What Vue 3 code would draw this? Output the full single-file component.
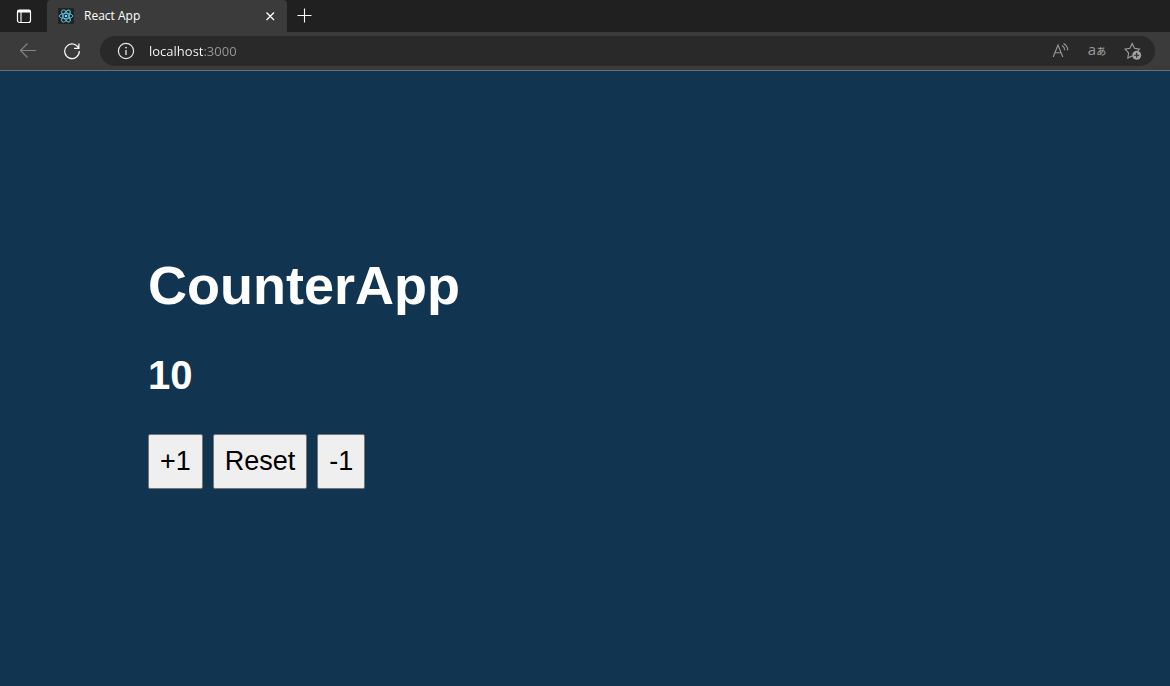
<script setup>
import { ref } from 'vue'

const initial = 10
const counter = ref(initial)
const address = ref('localhost:3000')
</script>

<template>
  <div class="browser">
    <header>
      <div class="tabstrip">
        <button class="icon-button tab-actions" aria-label="Tab actions menu">
          <svg width="16" height="16" viewBox="0 0 16 16" fill="none" stroke="#fff">
            <rect x="1.5" y="2" width="13" height="12.5" rx="2" stroke-width="1.2" />
            <path d="M1.5 3.2h13" stroke-width="2.6" />
            <path d="M5 4v10.5" stroke-width="1.1" />
          </svg>
        </button>
        <div class="tab">
          <svg class="favicon" width="16" height="16" viewBox="0 0 16 16" fill="none" stroke="#61c5df">
            <rect width="16" height="16" rx="1" fill="#202326" stroke="none" />
            <g stroke-width="0.9" transform="rotate(90 8 8)">
              <ellipse cx="8" cy="8" rx="6.8" ry="2.7" transform="rotate(90 8 8)" />
              <ellipse cx="8" cy="8" rx="6.8" ry="2.7" transform="rotate(30 8 8)" />
              <ellipse cx="8" cy="8" rx="6.8" ry="2.7" transform="rotate(150 8 8)" />
            </g>
            <circle cx="8" cy="8" r="1.3" fill="#61dafb" stroke="none" />
          </svg>
          <span class="tab-title">React App</span>
          <button class="icon-button close" aria-label="Close tab">
            <svg width="10" height="10" viewBox="0 0 10 10" fill="none" stroke="#fff" stroke-width="1.3">
              <path d="M1.5 1.5l7.5 7.5M9 1.5l-7.5 7.5" />
            </svg>
          </button>
        </div>
        <button class="icon-button new-tab" aria-label="New tab">
          <svg width="16" height="16" viewBox="0 0 16 16" fill="none" stroke="#fff" stroke-width="1.1">
            <path d="M8.5 0.5v14M1.5 7.5h14" />
          </svg>
        </button>
      </div>
      <div class="toolbar">
        <button class="icon-button" aria-label="Back">
          <svg width="18" height="18" viewBox="0 0 18 18" fill="none" stroke="#858585" stroke-width="1.1">
            <path d="M17 8.5H1.5M8.5 1.5l-7 7 7 7" />
          </svg>
        </button>
        <button class="icon-button reload" aria-label="Refresh">
          <svg width="18" height="18" viewBox="0 0 18 18" fill="none" stroke="#fff" stroke-width="1.2">
            <path d="M15.6 6.1A7.3 7.3 0 1 0 16.3 9M15.9 1.5v4.8h-4.8" />
          </svg>
        </button>
        <div class="address">
          <button class="icon-button" aria-label="View site information">
            <svg width="18" height="18" viewBox="0 0 18 18" fill="none" stroke="#e8e8e8" stroke-width="1.2">
              <circle cx="9" cy="9" r="7.6" />
              <path d="M9 8v5" stroke-width="1.3" />
              <circle cx="9" cy="5.6" r=".9" fill="#e8e8e8" stroke="none" />
            </svg>
          </button>
          <input v-model="address" class="url" type="text" aria-label="Address" spellcheck="false" />
          <button class="icon-button" aria-label="Read aloud">
            <svg width="18" height="18" viewBox="0 0 18 18" fill="none" stroke="#999" stroke-width="1.1">
              <path d="M1.2 15l4.8-12 4.8 12M2.8 10.7h6.4M10 3.6q2.6 1.4 2.8 4.6M11.6 1.6q3.9 2.2 4.2 6.8" />
            </svg>
          </button>
          <button class="icon-button translate" aria-label="Translate">
            <span>a</span><span class="kana">あ</span>
          </button>
          <button class="icon-button" aria-label="Add to favorites">
            <svg width="18" height="18" viewBox="0 0 18 18" fill="none" stroke="#a0a0a0" stroke-width="1.1">
              <path d="M8 14l-4.2 2 .8-5L1 7.1l4.9-.8L8.2 1.6l2.3 4.7 4.9.8-1.6 1.5" />
              <circle cx="12.7" cy="13.2" r="4.5" fill="#a0a0a0" stroke="none" />
              <path d="M12.7 10.7v5M10.2 13.2h5" stroke="#292929" />
            </svg>
          </button>
        </div>
      </div>
    </header>
    <main>
      <h1>CounterApp</h1>
      <h2>{{ counter }}</h2>
      <div class="actions">
        <button @click="counter++">+1</button>
        <button @click="counter = initial">Reset</button>
        <button @click="counter--">-1</button>
      </div>
    </main>
  </div>
</template>

<style>
body {
  margin: 0;
  background: #113450;
}
</style>

<style scoped>
.browser {
  min-height: 100vh;
  display: flex;
  flex-direction: column;
  background: #113450;
  font-family: "Open Sans", "Noto Sans CJK JP", sans-serif;
}

header {
  background: #3b3b3b;
  border-bottom: 1px solid #64717b;
}

.tabstrip {
  display: flex;
  height: 32px;
  background: #202020;
}

.icon-button {
  display: flex;
  align-items: center;
  justify-content: center;
  flex: none;
  padding: 0;
  border: 0;
  background: transparent;
  color: #999;
  font-family: inherit;
}

.tab-actions {
  width: 47px;
}

.tab {
  display: flex;
  align-items: center;
  box-sizing: border-box;
  width: 240px;
  padding: 0 12px 0 11px;
  border-radius: 4px 4px 0 0;
  background: #3b3b3b;
}

.tab-title {
  flex: 1;
  margin-left: 10px;
  color: #fff;
  font-size: 12px;
  line-height: 16px;
}

.new-tab {
  width: 34px;
}

.toolbar {
  display: flex;
  align-items: center;
  height: 38px;
  padding: 0 15px 0 19px;
}

.reload {
  margin: 0 19px 0 26px;
}

.address {
  display: flex;
  flex: 1;
  align-items: center;
  gap: 18px;
  height: 30px;
  padding: 0 13px 0 17px;
  border-radius: 15px;
  background: #292929;
}

.url {
  flex: 1;
  min-width: 0;
  margin-left: -4px;
  padding: 0;
  border: 0;
  outline: 0;
  background: linear-gradient(90deg, #fff 55px, #999 55px) text;
  color: transparent;
  font-family: inherit;
  font-size: 13px;
  line-height: 20px;
}

.translate {
  align-items: baseline;
  width: 18px;
  padding-bottom: 3px;
  font-size: 15px;
  line-height: 18px;
}

.kana {
  font-size: 10px;
  font-weight: 500;
}

main {
  flex: 1;
  display: flex;
  flex-direction: column;
  justify-content: center;
  padding: 0 148px 14px;
  color: #fff;
  font-family: "Liberation Sans", Arial, sans-serif;
}

h1 {
  margin: 0 0 36px;
  font-size: 54px;
  line-height: 62px;
}

h2 {
  margin: 0 0 36px;
  font-size: 40px;
  line-height: 46px;
}

.actions {
  display: flex;
  gap: 10px;
}

.actions button {
  height: 55px;
  padding: 0 11px 2px;
  border: 1px solid #767676;
  border-radius: 2px;
  background: #efefef;
  color: #000;
  font-family: inherit;
  font-size: 27px;
  line-height: 32px;
}
</style>
